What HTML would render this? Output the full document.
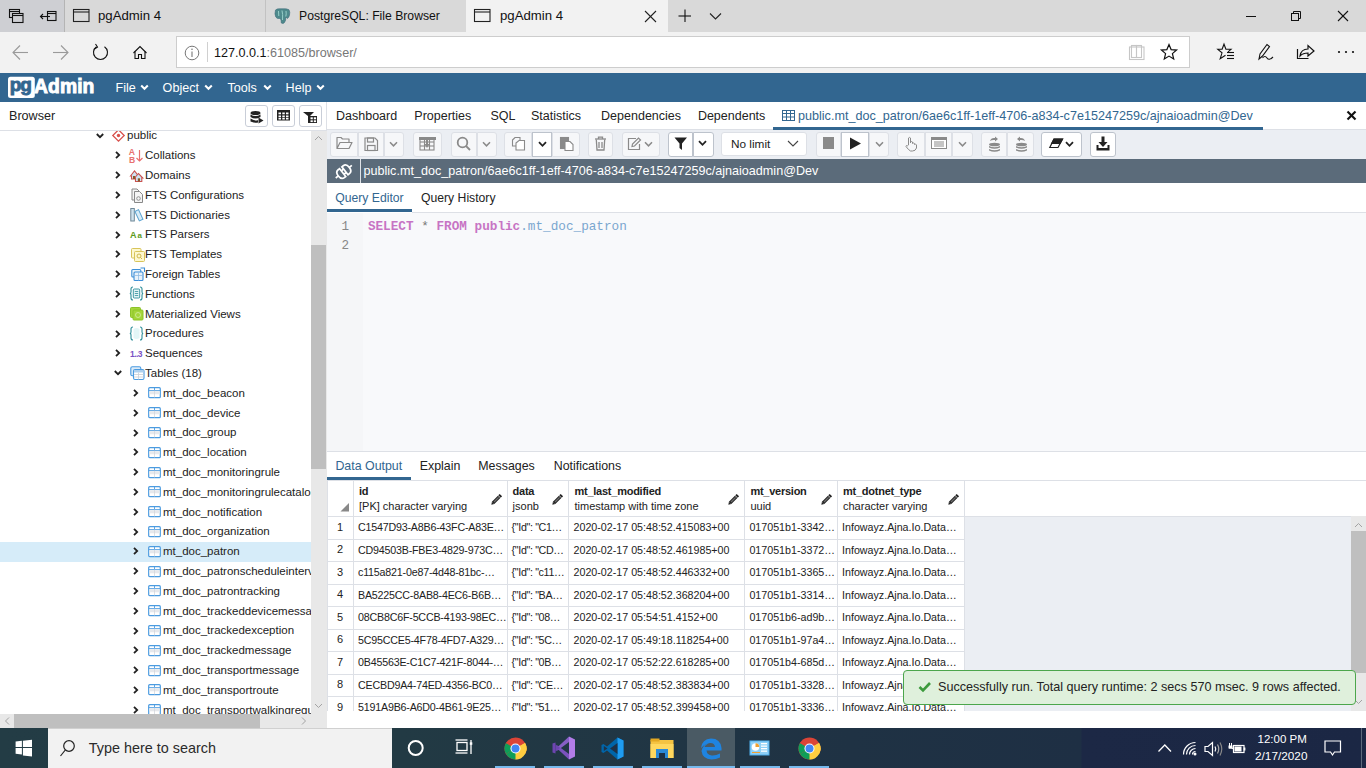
<!DOCTYPE html><html><head><meta charset="utf-8"><style>
html,body{margin:0;padding:0;}
body{width:1366px;height:768px;overflow:hidden;position:relative;background:#fff;font-family:"Liberation Sans",sans-serif;}
div,span,svg{box-sizing:border-box;}
.t{position:absolute;white-space:nowrap;line-height:1;}
svg{position:absolute;overflow:visible;}
</style></head><body>
<div style="position:absolute;left:0px;top:0px;width:1366px;height:32px;background:#d9d9d9"></div>
<div style="position:absolute;left:0px;top:0px;width:64px;height:32px;background:#cecfd3"></div>
<div style="position:absolute;left:64px;top:0px;width:1px;height:32px;background:#b4b4b4"></div>
<div style="position:absolute;left:265px;top:0px;width:1px;height:32px;background:#c2c2c2"></div>
<div style="position:absolute;left:466px;top:0px;width:202px;height:32px;background:#f2f2f2"></div>
<svg style="left:0;top:0" width="70" height="32"><g fill="none" stroke="#111" stroke-width="1.1">
<rect x="9.5" y="9.5" width="10" height="8"/><rect x="12.5" y="13.5" width="10.5" height="9" fill="#cecfd3"/>
<line x1="9.5" y1="11.5" x2="19.5" y2="11.5"/><line x1="12.5" y1="15.5" x2="23" y2="15.5"/>
<rect x="47.5" y="11.5" width="8.5" height="9"/><line x1="47.5" y1="13.5" x2="56" y2="13.5"/>
<line x1="40.5" y1="16.5" x2="50" y2="16.5"/><polyline points="43,14 40.5,16.5 43,19"/>
</g></svg>
<svg style="left:73px;top:8px" width="18" height="16"><g fill="none" stroke="#222" stroke-width="1.1"><rect x="0.5" y="1.5" width="15.5" height="12"/><line x1="0.5" y1="4" x2="16" y2="4"/></g></svg>
<div style="position:absolute;left:98px;top:8.05px;font:normal 13.2px/15.18px 'Liberation Sans',sans-serif;color:#111;white-space:nowrap;">pgAdmin 4</div>
<svg style="left:274px;top:8px" width="17" height="16"><path d="M1.5 2 Q3 0.5 6 0.8 L9 0.8 Q12.5 0.3 15 1.8 Q16.3 4 15.5 7 Q15 9.5 13.5 10.5 L12 9 L11.5 12.5 Q10.5 15.2 9 15.5 L7.3 15 L7 11.5 L5.5 10.5 Q3 11 1.8 9 Q0.3 6 1.5 2 Z" fill="#4e8a8c" stroke="#3d6a78" stroke-width="0.6"/><g stroke="#9fd6cf" stroke-width="0.9" fill="none"><path d="M4.5 3 L4.8 8"/><path d="M8 2.5 Q9 6 8.5 12"/><path d="M12 3 Q12.5 6 11.8 8.5"/></g></svg>
<div style="position:absolute;left:299px;top:8.96px;font:normal 12.2px/14.03px 'Liberation Sans',sans-serif;color:#111;white-space:nowrap;">PostgreSQL: File Browser</div>
<svg style="left:474px;top:8px" width="18" height="16"><g fill="none" stroke="#222" stroke-width="1.1"><rect x="0.5" y="1.5" width="15.5" height="12"/><line x1="0.5" y1="4" x2="16" y2="4"/></g></svg>
<div style="position:absolute;left:500px;top:8.05px;font:normal 13.2px/15.18px 'Liberation Sans',sans-serif;color:#111;white-space:nowrap;">pgAdmin 4</div>
<svg style="left:644px;top:10px" width="14" height="14"><g stroke="#222" stroke-width="1.1"><line x1="1" y1="1" x2="12" y2="12"/><line x1="12" y1="1" x2="1" y2="12"/></g></svg>
<svg style="left:678px;top:9px" width="14" height="14"><g stroke="#111" stroke-width="1.1"><line x1="7" y1="0.5" x2="7" y2="13"/><line x1="0.5" y1="7" x2="13" y2="7"/></g></svg>
<svg style="left:709px;top:12px" width="14" height="8"><polyline points="1,1.5 6.5,7 12,1.5" fill="none" stroke="#222" stroke-width="1.1"/></svg>
<div style="position:absolute;left:1246px;top:16px;width:10px;height:1px;background:#111"></div>
<svg style="left:1290px;top:10px" width="14" height="12"><g fill="none" stroke="#111" stroke-width="1"><rect x="1.5" y="3.5" width="7" height="7"/><polyline points="3.5,3.5 3.5,1.5 10.5,1.5 10.5,8.5 8.5,8.5"/></g></svg>
<svg style="left:1337px;top:10px" width="12" height="12"><g stroke="#111" stroke-width="1.1"><line x1="1" y1="1" x2="11" y2="11"/><line x1="11" y1="1" x2="1" y2="11"/></g></svg>
<div style="position:absolute;left:0px;top:32px;width:1366px;height:41px;background:#f2f2f2"></div>
<svg style="left:0;top:32px" width="170" height="41"><g fill="none" stroke-width="1.1">
<g stroke="#9a9a9a"><line x1="13" y1="20.5" x2="28" y2="20.5"/><polyline points="20,13.5 13,20.5 20,27.5"/>
<line x1="53" y1="20.5" x2="68" y2="20.5"/><polyline points="61,13.5 68,20.5 61,27.5"/></g>
<g stroke="#111"><path d="M104.5 14.8 A7 7 0 1 1 96.5 14.8"/><polyline points="95.5,12 97.5,15 94.5,17"/>
<polyline points="133.5,21 140,14.5 146.5,21"/><polyline points="135,19.5 135,26.5 138.5,26.5 138.5,22.5 141.5,22.5 141.5,26.5 145,26.5 145,19.5"/></g>
</g></svg>
<div style="position:absolute;left:176px;top:36px;width:1014px;height:32px;background:#fff;border:1px solid #cdcdcd"></div>
<svg style="left:184px;top:45px" width="16" height="16"><circle cx="8" cy="8" r="6.8" fill="none" stroke="#777" stroke-width="1"/><line x1="8" y1="6.5" x2="8" y2="12" stroke="#777" stroke-width="1.1"/><circle cx="8" cy="4.3" r="0.8" fill="#777"/></svg>
<div style="position:absolute;left:207px;top:42px;width:1px;height:20px;background:#d0d0d0"></div>
<div style="position:absolute;left:214px;top:45.60px;font:normal 12.6px/14.49px 'Liberation Sans',sans-serif;color:#111;white-space:nowrap;">127.0.0.1<span style="color:#777">:61085/browser/</span></div>
<svg style="left:1128px;top:45px" width="18" height="16"><g fill="none" stroke="#c6c6c6" stroke-width="1.1"><rect x="1.5" y="2" width="14.5" height="12.5"/><rect x="3.5" y="0.5" width="5" height="12"/><rect x="8.5" y="0.5" width="5" height="12"/></g></svg>
<svg style="left:1161px;top:44px" width="17" height="17"><polygon points="8.00,0.50 10.12,5.59 15.61,6.03 11.42,9.61 12.70,14.97 8.00,12.10 3.30,14.97 4.58,9.61 0.39,6.03 5.88,5.59" fill="none" stroke="#111" stroke-width="1.2" stroke-linejoin="miter"/></svg>
<svg style="left:1217px;top:43px" width="20" height="18"><path d="M11 8.8 L14 6.3 L8.9 6.3 L7 1.2 L5.1 6.3 L0.8 6.3 L5 9.8 L3.2 15.8 L8.5 12.3" fill="none" stroke="#111" stroke-width="1.1" stroke-linejoin="miter"/>
<g stroke="#111" stroke-width="1.1"><line x1="10" y1="9.5" x2="17" y2="9.5"/><line x1="10" y1="12.5" x2="17" y2="12.5"/><line x1="10" y1="15.5" x2="17" y2="15.5"/></g></svg>
<svg style="left:1257px;top:43px" width="20" height="18"><g fill="none" stroke="#111" stroke-width="1.1"><path d="M2 16 L3 11 L10 1.5 L12.5 3.5 L5.5 13 Z"/><path d="M5.5 15 Q8 12 10 15 T16 14"/></g></svg>
<svg style="left:1296px;top:43px" width="20" height="17"><g fill="none" stroke="#111" stroke-width="1.2"><polyline points="1.5,6 1.5,15.5 12.5,15.5"/><path d="M4 13 Q5 6 12 6 L12 2.5 L18 8 L12 13 L12 10 Q7 10 4 13 Z"/></g></svg>
<svg style="left:1337px;top:50px" width="18" height="4"><g fill="#111"><circle cx="2" cy="2" r="1.1"/><circle cx="9" cy="2" r="1.1"/><circle cx="16" cy="2" r="1.1"/></g></svg>
<div style="position:absolute;left:0px;top:73px;width:1366px;height:29px;background:#326690"></div>
<svg style="left:0;top:72px" width="100" height="30">
<rect x="8" y="4.8" width="26.8" height="21.2" rx="2.5" fill="#fff"/>
<text x="9.8" y="18.6" font-family="Liberation Sans" font-weight="bold" font-size="19" fill="#326690" stroke="#326690" stroke-width="0.9" letter-spacing="-1.2">pg</text>
<text x="34" y="21.2" font-family="Liberation Sans" font-weight="bold" font-size="19.3" fill="#fff" stroke="#fff" stroke-width="0.9" letter-spacing="0.1">Admin</text>
</svg>
<div style="position:absolute;left:115.5px;top:81.20px;font:normal 12.6px/14.49px 'Liberation Sans',sans-serif;color:#fff;white-space:nowrap;">File</div>
<svg style="left:140px;top:84px" width="10" height="7"><polyline points="1.2,1.5 4.5,4.8 7.8,1.5" fill="none" stroke="#fff" stroke-width="2"/></svg>
<div style="position:absolute;left:162.6px;top:81.20px;font:normal 12.6px/14.49px 'Liberation Sans',sans-serif;color:#fff;white-space:nowrap;">Object</div>
<svg style="left:204px;top:84px" width="10" height="7"><polyline points="1.2,1.5 4.5,4.8 7.8,1.5" fill="none" stroke="#fff" stroke-width="2"/></svg>
<div style="position:absolute;left:227.5px;top:81.20px;font:normal 12.6px/14.49px 'Liberation Sans',sans-serif;color:#fff;white-space:nowrap;">Tools</div>
<svg style="left:262.5px;top:84px" width="10" height="7"><polyline points="1.2,1.5 4.5,4.8 7.8,1.5" fill="none" stroke="#fff" stroke-width="2"/></svg>
<div style="position:absolute;left:285.6px;top:81.20px;font:normal 12.6px/14.49px 'Liberation Sans',sans-serif;color:#fff;white-space:nowrap;">Help</div>
<svg style="left:315.5px;top:84px" width="10" height="7"><polyline points="1.2,1.5 4.5,4.8 7.8,1.5" fill="none" stroke="#fff" stroke-width="2"/></svg>
<div style="position:absolute;left:0px;top:102px;width:327px;height:28px;background:#fff"></div>
<div style="position:absolute;left:9px;top:108.60px;font:normal 12.6px/14.49px 'Liberation Sans',sans-serif;color:#222;white-space:nowrap;">Browser</div>
<div style="position:absolute;left:0px;top:130px;width:327px;height:1px;background:#dde0e6"></div>
<div style="position:absolute;left:326px;top:102px;width:1px;height:28px;background:#dde0e6"></div>
<div style="position:absolute;left:245px;top:105px;width:23px;height:22px;background:#fff;border:1px solid #c9ced8;border-radius:3px"></div>
<div style="position:absolute;left:272px;top:105px;width:23px;height:22px;background:#fff;border:1px solid #c9ced8;border-radius:3px"></div>
<div style="position:absolute;left:299px;top:105px;width:23px;height:22px;background:#fff;border:1px solid #c9ced8;border-radius:3px"></div>
<svg style="left:249px;top:110px" width="16" height="15"><g fill="#222">
<ellipse cx="6.5" cy="3" rx="5" ry="2"/><path d="M1.5 4.5 Q6.5 7.5 11.5 4.5 L11.5 7 Q6.5 10 1.5 7Z"/><path d="M1.5 8.5 Q6.5 11.5 9 10 L9 12.5 Q6.5 13.5 1.5 11.5Z"/>
<polygon points="9.5,7.5 14.5,10.5 9.5,13.5"/></g></svg>
<svg style="left:276px;top:109px" width="16" height="13"><rect x="1" y="1" width="13" height="10.5" fill="#222"/><g fill="#fff">
<rect x="2.5" y="3.5" width="2.5" height="1.8"/><rect x="6.3" y="3.5" width="2.5" height="1.8"/><rect x="10" y="3.5" width="2.5" height="1.8"/>
<rect x="2.5" y="6.5" width="2.5" height="1.8"/><rect x="6.3" y="6.5" width="2.5" height="1.8"/><rect x="10" y="6.5" width="2.5" height="1.8"/>
<rect x="2.5" y="9" width="2.5" height="1.5"/><rect x="6.3" y="9" width="2.5" height="1.5"/><rect x="10" y="9" width="2.5" height="1.5"/></g></svg>
<svg style="left:302px;top:111px" width="18" height="14"><polygon points="1,1 12,1 8,5 8,12 6,12 6,5" fill="#222"/><rect x="7" y="5" width="8" height="7" fill="#222"/><g fill="#fff"><rect x="8.5" y="6.3" width="2.3" height="2"/><rect x="11.8" y="6.3" width="2.3" height="2"/><rect x="8.5" y="9.3" width="2.3" height="1.8"/><rect x="11.8" y="9.3" width="2.3" height="1.8"/></g></svg>
<div style="position:absolute;left:0;top:131px;width:311px;height:583px;overflow:hidden">
<svg style="left:96px;top:1.5px" width="9" height="6"><polyline points="0.8,1 4,4.2 7.2,1" fill="none" stroke="#222" stroke-width="1.8"/></svg>
<svg style="left:111.5px;top:-2.0px" width="13" height="13"><polygon points="6.5,0.8 12.2,6.5 6.5,12.2 0.8,6.5" fill="#fff" stroke="#d8504c" stroke-width="1.3"/><circle cx="6.5" cy="6.5" r="1.7" fill="#d8504c"/></svg>
<div style="position:absolute;left:127px;top:-1.61px;font:normal 11.5px/13.22px 'Liberation Sans',sans-serif;color:#222;white-space:nowrap;">public</div>
<svg style="left:115px;top:20.3px" width="7" height="9"><polyline points="1,0.8 4.2,4 1,7.2" fill="none" stroke="#222" stroke-width="1.8"/></svg>
<svg style="left:128.8px;top:17.3px" width="15" height="15"><text x="-0.3" y="7" font-family="Liberation Sans" font-weight="bold" font-size="8.6" fill="#e8706e">A</text><text x="0" y="14.6" font-family="Liberation Sans" font-weight="bold" font-size="8.6" fill="#e8706e">B</text><g stroke="#e8706e" stroke-width="1.2" fill="none"><line x1="10.5" y1="2" x2="10.5" y2="13"/><polyline points="7.5,10 10.5,13 13.5,10"/></g></svg>
<div style="position:absolute;left:145px;top:18.19px;font:normal 11.5px/13.22px 'Liberation Sans',sans-serif;color:#222;white-space:nowrap;">Collations</div>
<svg style="left:115px;top:40.1px" width="7" height="9"><polyline points="1,0.8 4.2,4 1,7.2" fill="none" stroke="#222" stroke-width="1.8"/></svg>
<svg style="left:129.4px;top:38.3px" width="15" height="13"><g stroke="#c9514e" stroke-width="1.1" fill="#cfe3f3"><path d="M1.5 7 L5.5 2 L9.5 7 L8.5 7 L8.5 10 L2.5 10 L2.5 7 Z"/><path d="M5.5 9 L9.5 4.5 L13.8 9 L12.8 9 L12.8 12.5 L6.5 12.5 L6.5 9 Z"/></g><rect x="4" y="7" width="2" height="3" fill="#8a5a2a"/><rect x="8.8" y="9.3" width="2.2" height="3.2" fill="#8a5a2a"/></svg>
<div style="position:absolute;left:145px;top:37.99px;font:normal 11.5px/13.22px 'Liberation Sans',sans-serif;color:#222;white-space:nowrap;">Domains</div>
<svg style="left:115px;top:59.9px" width="7" height="9"><polyline points="1,0.8 4.2,4 1,7.2" fill="none" stroke="#222" stroke-width="1.8"/></svg>
<svg style="left:130.8px;top:56.9px" width="14" height="15"><g stroke="#888" stroke-width="1" fill="#f4f4f4"><path d="M1 1 L6 1 L8 3 L8 12 L1 12 Z"/><path d="M3.5 3.5 L8.5 3.5 L11.5 6.5 L11.5 14.5 L3.5 14.5 Z"/></g><circle cx="7.5" cy="10.5" r="1.8" fill="none" stroke="#888" stroke-width="0.9"/></svg>
<div style="position:absolute;left:145px;top:57.79px;font:normal 11.5px/13.22px 'Liberation Sans',sans-serif;color:#222;white-space:nowrap;">FTS Configurations</div>
<svg style="left:115px;top:79.7px" width="7" height="9"><polyline points="1,0.8 4.2,4 1,7.2" fill="none" stroke="#222" stroke-width="1.8"/></svg>
<svg style="left:130.3px;top:77.2px" width="14" height="14"><rect x="0.8" y="0.5" width="3.5" height="12.5" fill="#cfe3ee" stroke="#6f8797" stroke-width="1"/><g transform="rotate(-25 9 7)"><rect x="6.8" y="2" width="4" height="10.5" fill="#d7ecf7" stroke="#5ba3d0" stroke-width="1"/></g></svg>
<div style="position:absolute;left:145px;top:77.59px;font:normal 11.5px/13.22px 'Liberation Sans',sans-serif;color:#222;white-space:nowrap;">FTS Dictionaries</div>
<svg style="left:115px;top:99.5px" width="7" height="9"><polyline points="1,0.8 4.2,4 1,7.2" fill="none" stroke="#222" stroke-width="1.8"/></svg>
<svg style="left:130.0px;top:97.0px" width="15" height="12"><text x="0" y="10" font-family="Liberation Sans" font-weight="bold" font-size="9" fill="#5c9a1c">A</text><text x="7.5" y="10" font-family="Liberation Sans" font-weight="bold" font-size="8" fill="#5c9a1c">a</text></svg>
<div style="position:absolute;left:145px;top:97.39px;font:normal 11.5px/13.22px 'Liberation Sans',sans-serif;color:#222;white-space:nowrap;">FTS Parsers</div>
<svg style="left:115px;top:119.3px" width="7" height="9"><polyline points="1,0.8 4.2,4 1,7.2" fill="none" stroke="#222" stroke-width="1.8"/></svg>
<svg style="left:130.5px;top:116.5px" width="14" height="14"><g stroke="#d8c45a" stroke-width="1" fill="#fdf8cf"><rect x="0.5" y="0.5" width="9.5" height="9.5" rx="1"/><rect x="3.5" y="3.5" width="10" height="10" rx="1"/></g><circle cx="8" cy="8" r="2" fill="none" stroke="#c9b03e" stroke-width="0.9"/><line x1="9.5" y1="9.5" x2="11" y2="11" stroke="#c9b03e" stroke-width="0.9"/></svg>
<div style="position:absolute;left:145px;top:117.19px;font:normal 11.5px/13.22px 'Liberation Sans',sans-serif;color:#222;white-space:nowrap;">FTS Templates</div>
<svg style="left:115px;top:139.1px" width="7" height="9"><polyline points="1,0.8 4.2,4 1,7.2" fill="none" stroke="#222" stroke-width="1.8"/></svg>
<svg style="left:130.5px;top:136.1px" width="14" height="14"><g stroke="#3d8fd8" stroke-width="1.1" fill="#e8f2fb"><rect x="0.8" y="2.5" width="9" height="7.5" rx="1"/><rect x="3" y="5" width="9" height="8.5" rx="1"/></g><g stroke="#8fbbe5" stroke-width="0.8"><line x1="3" y1="8.5" x2="12" y2="8.5"/><line x1="7.5" y1="5" x2="7.5" y2="13.5"/></g><path d="M9.5 1 L13.5 1 L13.5 5" fill="none" stroke="#3d8fd8" stroke-width="1.1"/></svg>
<div style="position:absolute;left:145px;top:136.99px;font:normal 11.5px/13.22px 'Liberation Sans',sans-serif;color:#222;white-space:nowrap;">Foreign Tables</div>
<svg style="left:115px;top:158.9px" width="7" height="9"><polyline points="1,0.8 4.2,4 1,7.2" fill="none" stroke="#222" stroke-width="1.8"/></svg>
<svg style="left:129.3px;top:155.4px" width="15" height="15"><g fill="none" stroke="#2f8f9a" stroke-width="1.1"><path d="M4 1 Q2 1 2 3 L2 6 Q2 7.5 0.8 7.5 Q2 7.5 2 9 L2 12 Q2 14 4 14"/><path d="M11 1 Q13 1 13 3 L13 6 Q13 7.5 14.2 7.5 Q13 7.5 13 9 L13 12 Q13 14 11 14"/></g><rect x="4.3" y="3" width="6.4" height="9" rx="1" fill="#e3f4f6" stroke="#2f8f9a" stroke-width="0.9"/><g stroke="#2f8f9a" stroke-width="0.8"><line x1="5.8" y1="5.5" x2="9.2" y2="5.5"/><line x1="5.8" y1="7.5" x2="9.2" y2="7.5"/><line x1="5.8" y1="9.5" x2="9.2" y2="9.5"/></g></svg>
<div style="position:absolute;left:145px;top:156.79px;font:normal 11.5px/13.22px 'Liberation Sans',sans-serif;color:#222;white-space:nowrap;">Functions</div>
<svg style="left:115px;top:178.7px" width="7" height="9"><polyline points="1,0.8 4.2,4 1,7.2" fill="none" stroke="#222" stroke-width="1.8"/></svg>
<svg style="left:130.0px;top:175.7px" width="14" height="14"><g fill="#a5d63a" stroke="#8cc32a" stroke-width="1"><rect x="0.5" y="0.5" width="10" height="10" rx="1"/><rect x="3" y="3" width="10" height="10" rx="1"/></g><circle cx="8" cy="8" r="2.5" fill="none" stroke="#cfeb9a" stroke-width="0.9"/></svg>
<div style="position:absolute;left:145px;top:176.59px;font:normal 11.5px/13.22px 'Liberation Sans',sans-serif;color:#222;white-space:nowrap;">Materialized Views</div>
<svg style="left:115px;top:198.5px" width="7" height="9"><polyline points="1,0.8 4.2,4 1,7.2" fill="none" stroke="#222" stroke-width="1.8"/></svg>
<svg style="left:129.3px;top:195.0px" width="15" height="15"><g fill="none" stroke="#2f8f9a" stroke-width="1.1"><path d="M4 1 Q2 1 2 3 L2 6 Q2 7.5 0.8 7.5 Q2 7.5 2 9 L2 12 Q2 14 4 14"/><path d="M11 1 Q13 1 13 3 L13 6 Q13 7.5 14.2 7.5 Q13 7.5 13 9 L13 12 Q13 14 11 14"/><path d="M4.5 3 Q7.5 1 10.5 3 L10.5 12 Q7.5 14 4.5 12 Z" fill="#e3f6f7" stroke="none"/></g></svg>
<div style="position:absolute;left:145px;top:196.39px;font:normal 11.5px/13.22px 'Liberation Sans',sans-serif;color:#222;white-space:nowrap;">Procedures</div>
<svg style="left:115px;top:218.3px" width="7" height="9"><polyline points="1,0.8 4.2,4 1,7.2" fill="none" stroke="#222" stroke-width="1.8"/></svg>
<svg style="left:129.5px;top:215.8px" width="15" height="12"><text x="0" y="10" font-family="Liberation Sans" font-weight="bold" font-size="8.5" fill="#7a4fc4" letter-spacing="-0.6">1..3</text></svg>
<div style="position:absolute;left:145px;top:216.19px;font:normal 11.5px/13.22px 'Liberation Sans',sans-serif;color:#222;white-space:nowrap;">Sequences</div>
<svg style="left:114px;top:239.1px" width="9" height="6"><polyline points="0.8,1 4,4.2 7.2,1" fill="none" stroke="#222" stroke-width="1.8"/></svg>
<svg style="left:130.0px;top:235.1px" width="15" height="15"><rect x="0.8" y="0.8" width="10" height="9" rx="1.5" fill="#dcebf8" stroke="#4b9be0" stroke-width="1.1"/><rect x="3.5" y="3.5" width="10.5" height="10" rx="1.5" fill="#fff" stroke="#4b9be0" stroke-width="1.1"/><rect x="4" y="4" width="9.5" height="2.5" fill="#aed0ee"/><g stroke="#c9ced6" stroke-width="0.8"><line x1="4" y1="8.5" x2="13.5" y2="8.5"/><line x1="4" y1="11" x2="13.5" y2="11"/><line x1="8.5" y1="6.5" x2="8.5" y2="13.5"/></g></svg>
<div style="position:absolute;left:145px;top:235.99px;font:normal 11.5px/13.22px 'Liberation Sans',sans-serif;color:#222;white-space:nowrap;">Tables (18)</div>
<svg style="left:133px;top:257.9px" width="7" height="9"><polyline points="1,0.8 4.2,4 1,7.2" fill="none" stroke="#222" stroke-width="1.8"/></svg>
<svg style="left:148.2px;top:256.3px" width="13" height="12"><rect x="0.7" y="0.7" width="11.6" height="10" rx="1" fill="#fff" stroke="#4b9be0" stroke-width="1.2"/><g stroke="#4b9be0" stroke-width="0.9"><line x1="0.7" y1="3.6" x2="12.3" y2="3.6"/><line x1="6.5" y1="0.7" x2="6.5" y2="3.6"/></g><rect x="1.3" y="4.3" width="10.4" height="3" fill="#e6e8ec"/><g stroke="#cfd3da" stroke-width="0.7"><line x1="6.5" y1="3.6" x2="6.5" y2="10.5"/></g></svg>
<div style="position:absolute;left:163px;top:255.79px;font:normal 11.5px/13.22px 'Liberation Sans',sans-serif;color:#222;white-space:nowrap;">mt_doc_beacon</div>
<svg style="left:133px;top:277.7px" width="7" height="9"><polyline points="1,0.8 4.2,4 1,7.2" fill="none" stroke="#222" stroke-width="1.8"/></svg>
<svg style="left:148.2px;top:276.1px" width="13" height="12"><rect x="0.7" y="0.7" width="11.6" height="10" rx="1" fill="#fff" stroke="#4b9be0" stroke-width="1.2"/><g stroke="#4b9be0" stroke-width="0.9"><line x1="0.7" y1="3.6" x2="12.3" y2="3.6"/><line x1="6.5" y1="0.7" x2="6.5" y2="3.6"/></g><rect x="1.3" y="4.3" width="10.4" height="3" fill="#e6e8ec"/><g stroke="#cfd3da" stroke-width="0.7"><line x1="6.5" y1="3.6" x2="6.5" y2="10.5"/></g></svg>
<div style="position:absolute;left:163px;top:275.59px;font:normal 11.5px/13.22px 'Liberation Sans',sans-serif;color:#222;white-space:nowrap;">mt_doc_device</div>
<svg style="left:133px;top:297.5px" width="7" height="9"><polyline points="1,0.8 4.2,4 1,7.2" fill="none" stroke="#222" stroke-width="1.8"/></svg>
<svg style="left:148.2px;top:295.9px" width="13" height="12"><rect x="0.7" y="0.7" width="11.6" height="10" rx="1" fill="#fff" stroke="#4b9be0" stroke-width="1.2"/><g stroke="#4b9be0" stroke-width="0.9"><line x1="0.7" y1="3.6" x2="12.3" y2="3.6"/><line x1="6.5" y1="0.7" x2="6.5" y2="3.6"/></g><rect x="1.3" y="4.3" width="10.4" height="3" fill="#e6e8ec"/><g stroke="#cfd3da" stroke-width="0.7"><line x1="6.5" y1="3.6" x2="6.5" y2="10.5"/></g></svg>
<div style="position:absolute;left:163px;top:295.39px;font:normal 11.5px/13.22px 'Liberation Sans',sans-serif;color:#222;white-space:nowrap;">mt_doc_group</div>
<svg style="left:133px;top:317.3px" width="7" height="9"><polyline points="1,0.8 4.2,4 1,7.2" fill="none" stroke="#222" stroke-width="1.8"/></svg>
<svg style="left:148.2px;top:315.7px" width="13" height="12"><rect x="0.7" y="0.7" width="11.6" height="10" rx="1" fill="#fff" stroke="#4b9be0" stroke-width="1.2"/><g stroke="#4b9be0" stroke-width="0.9"><line x1="0.7" y1="3.6" x2="12.3" y2="3.6"/><line x1="6.5" y1="0.7" x2="6.5" y2="3.6"/></g><rect x="1.3" y="4.3" width="10.4" height="3" fill="#e6e8ec"/><g stroke="#cfd3da" stroke-width="0.7"><line x1="6.5" y1="3.6" x2="6.5" y2="10.5"/></g></svg>
<div style="position:absolute;left:163px;top:315.19px;font:normal 11.5px/13.22px 'Liberation Sans',sans-serif;color:#222;white-space:nowrap;">mt_doc_location</div>
<svg style="left:133px;top:337.1px" width="7" height="9"><polyline points="1,0.8 4.2,4 1,7.2" fill="none" stroke="#222" stroke-width="1.8"/></svg>
<svg style="left:148.2px;top:335.5px" width="13" height="12"><rect x="0.7" y="0.7" width="11.6" height="10" rx="1" fill="#fff" stroke="#4b9be0" stroke-width="1.2"/><g stroke="#4b9be0" stroke-width="0.9"><line x1="0.7" y1="3.6" x2="12.3" y2="3.6"/><line x1="6.5" y1="0.7" x2="6.5" y2="3.6"/></g><rect x="1.3" y="4.3" width="10.4" height="3" fill="#e6e8ec"/><g stroke="#cfd3da" stroke-width="0.7"><line x1="6.5" y1="3.6" x2="6.5" y2="10.5"/></g></svg>
<div style="position:absolute;left:163px;top:334.99px;font:normal 11.5px/13.22px 'Liberation Sans',sans-serif;color:#222;white-space:nowrap;">mt_doc_monitoringrule</div>
<svg style="left:133px;top:356.9px" width="7" height="9"><polyline points="1,0.8 4.2,4 1,7.2" fill="none" stroke="#222" stroke-width="1.8"/></svg>
<svg style="left:148.2px;top:355.3px" width="13" height="12"><rect x="0.7" y="0.7" width="11.6" height="10" rx="1" fill="#fff" stroke="#4b9be0" stroke-width="1.2"/><g stroke="#4b9be0" stroke-width="0.9"><line x1="0.7" y1="3.6" x2="12.3" y2="3.6"/><line x1="6.5" y1="0.7" x2="6.5" y2="3.6"/></g><rect x="1.3" y="4.3" width="10.4" height="3" fill="#e6e8ec"/><g stroke="#cfd3da" stroke-width="0.7"><line x1="6.5" y1="3.6" x2="6.5" y2="10.5"/></g></svg>
<div style="position:absolute;left:163px;top:354.79px;font:normal 11.5px/13.22px 'Liberation Sans',sans-serif;color:#222;white-space:nowrap;">mt_doc_monitoringrulecatalog</div>
<svg style="left:133px;top:376.7px" width="7" height="9"><polyline points="1,0.8 4.2,4 1,7.2" fill="none" stroke="#222" stroke-width="1.8"/></svg>
<svg style="left:148.2px;top:375.1px" width="13" height="12"><rect x="0.7" y="0.7" width="11.6" height="10" rx="1" fill="#fff" stroke="#4b9be0" stroke-width="1.2"/><g stroke="#4b9be0" stroke-width="0.9"><line x1="0.7" y1="3.6" x2="12.3" y2="3.6"/><line x1="6.5" y1="0.7" x2="6.5" y2="3.6"/></g><rect x="1.3" y="4.3" width="10.4" height="3" fill="#e6e8ec"/><g stroke="#cfd3da" stroke-width="0.7"><line x1="6.5" y1="3.6" x2="6.5" y2="10.5"/></g></svg>
<div style="position:absolute;left:163px;top:374.59px;font:normal 11.5px/13.22px 'Liberation Sans',sans-serif;color:#222;white-space:nowrap;">mt_doc_notification</div>
<svg style="left:133px;top:396.5px" width="7" height="9"><polyline points="1,0.8 4.2,4 1,7.2" fill="none" stroke="#222" stroke-width="1.8"/></svg>
<svg style="left:148.2px;top:394.9px" width="13" height="12"><rect x="0.7" y="0.7" width="11.6" height="10" rx="1" fill="#fff" stroke="#4b9be0" stroke-width="1.2"/><g stroke="#4b9be0" stroke-width="0.9"><line x1="0.7" y1="3.6" x2="12.3" y2="3.6"/><line x1="6.5" y1="0.7" x2="6.5" y2="3.6"/></g><rect x="1.3" y="4.3" width="10.4" height="3" fill="#e6e8ec"/><g stroke="#cfd3da" stroke-width="0.7"><line x1="6.5" y1="3.6" x2="6.5" y2="10.5"/></g></svg>
<div style="position:absolute;left:163px;top:394.39px;font:normal 11.5px/13.22px 'Liberation Sans',sans-serif;color:#222;white-space:nowrap;">mt_doc_organization</div>
<div style="position:absolute;left:0px;top:411px;width:311px;height:20px;background:#d6ecf9"></div>
<svg style="left:133px;top:416.3px" width="7" height="9"><polyline points="1,0.8 4.2,4 1,7.2" fill="none" stroke="#222" stroke-width="1.8"/></svg>
<svg style="left:148.2px;top:414.7px" width="13" height="12"><rect x="0.7" y="0.7" width="11.6" height="10" rx="1" fill="#fff" stroke="#4b9be0" stroke-width="1.2"/><g stroke="#4b9be0" stroke-width="0.9"><line x1="0.7" y1="3.6" x2="12.3" y2="3.6"/><line x1="6.5" y1="0.7" x2="6.5" y2="3.6"/></g><rect x="1.3" y="4.3" width="10.4" height="3" fill="#e6e8ec"/><g stroke="#cfd3da" stroke-width="0.7"><line x1="6.5" y1="3.6" x2="6.5" y2="10.5"/></g></svg>
<div style="position:absolute;left:163px;top:414.19px;font:normal 11.5px/13.22px 'Liberation Sans',sans-serif;color:#222;white-space:nowrap;">mt_doc_patron</div>
<svg style="left:133px;top:436.1px" width="7" height="9"><polyline points="1,0.8 4.2,4 1,7.2" fill="none" stroke="#222" stroke-width="1.8"/></svg>
<svg style="left:148.2px;top:434.5px" width="13" height="12"><rect x="0.7" y="0.7" width="11.6" height="10" rx="1" fill="#fff" stroke="#4b9be0" stroke-width="1.2"/><g stroke="#4b9be0" stroke-width="0.9"><line x1="0.7" y1="3.6" x2="12.3" y2="3.6"/><line x1="6.5" y1="0.7" x2="6.5" y2="3.6"/></g><rect x="1.3" y="4.3" width="10.4" height="3" fill="#e6e8ec"/><g stroke="#cfd3da" stroke-width="0.7"><line x1="6.5" y1="3.6" x2="6.5" y2="10.5"/></g></svg>
<div style="position:absolute;left:163px;top:433.99px;font:normal 11.5px/13.22px 'Liberation Sans',sans-serif;color:#222;white-space:nowrap;">mt_doc_patronscheduleinterval</div>
<svg style="left:133px;top:455.9px" width="7" height="9"><polyline points="1,0.8 4.2,4 1,7.2" fill="none" stroke="#222" stroke-width="1.8"/></svg>
<svg style="left:148.2px;top:454.3px" width="13" height="12"><rect x="0.7" y="0.7" width="11.6" height="10" rx="1" fill="#fff" stroke="#4b9be0" stroke-width="1.2"/><g stroke="#4b9be0" stroke-width="0.9"><line x1="0.7" y1="3.6" x2="12.3" y2="3.6"/><line x1="6.5" y1="0.7" x2="6.5" y2="3.6"/></g><rect x="1.3" y="4.3" width="10.4" height="3" fill="#e6e8ec"/><g stroke="#cfd3da" stroke-width="0.7"><line x1="6.5" y1="3.6" x2="6.5" y2="10.5"/></g></svg>
<div style="position:absolute;left:163px;top:453.79px;font:normal 11.5px/13.22px 'Liberation Sans',sans-serif;color:#222;white-space:nowrap;">mt_doc_patrontracking</div>
<svg style="left:133px;top:475.7px" width="7" height="9"><polyline points="1,0.8 4.2,4 1,7.2" fill="none" stroke="#222" stroke-width="1.8"/></svg>
<svg style="left:148.2px;top:474.1px" width="13" height="12"><rect x="0.7" y="0.7" width="11.6" height="10" rx="1" fill="#fff" stroke="#4b9be0" stroke-width="1.2"/><g stroke="#4b9be0" stroke-width="0.9"><line x1="0.7" y1="3.6" x2="12.3" y2="3.6"/><line x1="6.5" y1="0.7" x2="6.5" y2="3.6"/></g><rect x="1.3" y="4.3" width="10.4" height="3" fill="#e6e8ec"/><g stroke="#cfd3da" stroke-width="0.7"><line x1="6.5" y1="3.6" x2="6.5" y2="10.5"/></g></svg>
<div style="position:absolute;left:163px;top:473.59px;font:normal 11.5px/13.22px 'Liberation Sans',sans-serif;color:#222;white-space:nowrap;">mt_doc_trackeddevicemessage</div>
<svg style="left:133px;top:495.5px" width="7" height="9"><polyline points="1,0.8 4.2,4 1,7.2" fill="none" stroke="#222" stroke-width="1.8"/></svg>
<svg style="left:148.2px;top:493.9px" width="13" height="12"><rect x="0.7" y="0.7" width="11.6" height="10" rx="1" fill="#fff" stroke="#4b9be0" stroke-width="1.2"/><g stroke="#4b9be0" stroke-width="0.9"><line x1="0.7" y1="3.6" x2="12.3" y2="3.6"/><line x1="6.5" y1="0.7" x2="6.5" y2="3.6"/></g><rect x="1.3" y="4.3" width="10.4" height="3" fill="#e6e8ec"/><g stroke="#cfd3da" stroke-width="0.7"><line x1="6.5" y1="3.6" x2="6.5" y2="10.5"/></g></svg>
<div style="position:absolute;left:163px;top:493.39px;font:normal 11.5px/13.22px 'Liberation Sans',sans-serif;color:#222;white-space:nowrap;">mt_doc_trackedexception</div>
<svg style="left:133px;top:515.3px" width="7" height="9"><polyline points="1,0.8 4.2,4 1,7.2" fill="none" stroke="#222" stroke-width="1.8"/></svg>
<svg style="left:148.2px;top:513.7px" width="13" height="12"><rect x="0.7" y="0.7" width="11.6" height="10" rx="1" fill="#fff" stroke="#4b9be0" stroke-width="1.2"/><g stroke="#4b9be0" stroke-width="0.9"><line x1="0.7" y1="3.6" x2="12.3" y2="3.6"/><line x1="6.5" y1="0.7" x2="6.5" y2="3.6"/></g><rect x="1.3" y="4.3" width="10.4" height="3" fill="#e6e8ec"/><g stroke="#cfd3da" stroke-width="0.7"><line x1="6.5" y1="3.6" x2="6.5" y2="10.5"/></g></svg>
<div style="position:absolute;left:163px;top:513.19px;font:normal 11.5px/13.22px 'Liberation Sans',sans-serif;color:#222;white-space:nowrap;">mt_doc_trackedmessage</div>
<svg style="left:133px;top:535.1px" width="7" height="9"><polyline points="1,0.8 4.2,4 1,7.2" fill="none" stroke="#222" stroke-width="1.8"/></svg>
<svg style="left:148.2px;top:533.5px" width="13" height="12"><rect x="0.7" y="0.7" width="11.6" height="10" rx="1" fill="#fff" stroke="#4b9be0" stroke-width="1.2"/><g stroke="#4b9be0" stroke-width="0.9"><line x1="0.7" y1="3.6" x2="12.3" y2="3.6"/><line x1="6.5" y1="0.7" x2="6.5" y2="3.6"/></g><rect x="1.3" y="4.3" width="10.4" height="3" fill="#e6e8ec"/><g stroke="#cfd3da" stroke-width="0.7"><line x1="6.5" y1="3.6" x2="6.5" y2="10.5"/></g></svg>
<div style="position:absolute;left:163px;top:532.99px;font:normal 11.5px/13.22px 'Liberation Sans',sans-serif;color:#222;white-space:nowrap;">mt_doc_transportmessage</div>
<svg style="left:133px;top:554.9px" width="7" height="9"><polyline points="1,0.8 4.2,4 1,7.2" fill="none" stroke="#222" stroke-width="1.8"/></svg>
<svg style="left:148.2px;top:553.3px" width="13" height="12"><rect x="0.7" y="0.7" width="11.6" height="10" rx="1" fill="#fff" stroke="#4b9be0" stroke-width="1.2"/><g stroke="#4b9be0" stroke-width="0.9"><line x1="0.7" y1="3.6" x2="12.3" y2="3.6"/><line x1="6.5" y1="0.7" x2="6.5" y2="3.6"/></g><rect x="1.3" y="4.3" width="10.4" height="3" fill="#e6e8ec"/><g stroke="#cfd3da" stroke-width="0.7"><line x1="6.5" y1="3.6" x2="6.5" y2="10.5"/></g></svg>
<div style="position:absolute;left:163px;top:552.79px;font:normal 11.5px/13.22px 'Liberation Sans',sans-serif;color:#222;white-space:nowrap;">mt_doc_transportroute</div>
<svg style="left:133px;top:574.7px" width="7" height="9"><polyline points="1,0.8 4.2,4 1,7.2" fill="none" stroke="#222" stroke-width="1.8"/></svg>
<svg style="left:148.2px;top:573.1px" width="13" height="12"><rect x="0.7" y="0.7" width="11.6" height="10" rx="1" fill="#fff" stroke="#4b9be0" stroke-width="1.2"/><g stroke="#4b9be0" stroke-width="0.9"><line x1="0.7" y1="3.6" x2="12.3" y2="3.6"/><line x1="6.5" y1="0.7" x2="6.5" y2="3.6"/></g><rect x="1.3" y="4.3" width="10.4" height="3" fill="#e6e8ec"/><g stroke="#cfd3da" stroke-width="0.7"><line x1="6.5" y1="3.6" x2="6.5" y2="10.5"/></g></svg>
<div style="position:absolute;left:163px;top:572.59px;font:normal 11.5px/13.22px 'Liberation Sans',sans-serif;color:#222;white-space:nowrap;">mt_doc_transportwalkingrequest</div>
</div>
<div style="position:absolute;left:311px;top:131px;width:16px;height:583px;background:#e8e8e8"></div>
<div style="position:absolute;left:311px;top:245px;width:15px;height:224px;background:#bfbfbf"></div>
<svg style="left:311px;top:131px" width="15" height="583"><polyline points="4,9 7.5,5.5 11,9" fill="none" stroke="#a3a3a3" stroke-width="1"/><polyline points="4,573 7.5,576.5 11,573" fill="none" stroke="#a3a3a3" stroke-width="1"/></svg>
<div style="position:absolute;left:0px;top:714px;width:327px;height:14px;background:#e8e8e8"></div>
<div style="position:absolute;left:14px;top:714px;width:246px;height:14px;background:#bfbfbf"></div>
<svg style="left:0;top:714px" width="311" height="14"><polyline points="9,3.5 5.5,7 9,10.5" fill="none" stroke="#a3a3a3" stroke-width="1"/><polyline points="302,3.5 305.5,7 302,10.5" fill="none" stroke="#a3a3a3" stroke-width="1"/></svg>
<div style="position:absolute;left:327px;top:102px;width:1039px;height:28px;background:#fff"></div>
<div style="position:absolute;left:336px;top:108.89px;font:normal 12.5px/14.37px 'Liberation Sans',sans-serif;color:#222;white-space:nowrap;">Dashboard</div>
<div style="position:absolute;left:414.3px;top:108.89px;font:normal 12.5px/14.37px 'Liberation Sans',sans-serif;color:#222;white-space:nowrap;">Properties</div>
<div style="position:absolute;left:490.4px;top:108.89px;font:normal 12.5px/14.37px 'Liberation Sans',sans-serif;color:#222;white-space:nowrap;">SQL</div>
<div style="position:absolute;left:530.9px;top:108.89px;font:normal 12.5px/14.37px 'Liberation Sans',sans-serif;color:#222;white-space:nowrap;">Statistics</div>
<div style="position:absolute;left:601.1px;top:108.89px;font:normal 12.5px/14.37px 'Liberation Sans',sans-serif;color:#222;white-space:nowrap;">Dependencies</div>
<div style="position:absolute;left:697.9px;top:108.89px;font:normal 12.5px/14.37px 'Liberation Sans',sans-serif;color:#222;white-space:nowrap;">Dependents</div>
<div style="position:absolute;left:327px;top:129px;width:1039px;height:1px;background:#dde0e6"></div>
<svg style="left:782px;top:110px" width="14" height="12"><rect x="0.5" y="0.5" width="12" height="10" fill="#fff" stroke="#326690" stroke-width="1"/><g stroke="#326690" stroke-width="1"><line x1="0.5" y1="3.5" x2="12.5" y2="3.5"/><line x1="0.5" y1="7" x2="12.5" y2="7"/><line x1="4.5" y1="0.5" x2="4.5" y2="10.5"/><line x1="8.5" y1="0.5" x2="8.5" y2="10.5"/></g></svg>
<div style="position:absolute;left:798px;top:108.80px;font:normal 12.6px/14.49px 'Liberation Sans',sans-serif;color:#326690;white-space:nowrap;">public.mt_doc_patron/6ae6c1ff-1eff-4706-a834-c7e15247259c/ajnaioadmin@Dev</div>
<div style="position:absolute;left:773px;top:127px;width:490px;height:3px;background:#326690"></div>
<svg style="left:1346px;top:110px" width="11" height="11"><g stroke="#111" stroke-width="2.2"><line x1="1.5" y1="1.5" x2="9.5" y2="9.5"/><line x1="9.5" y1="1.5" x2="1.5" y2="9.5"/></g></svg>
<div style="position:absolute;left:327px;top:130px;width:1039px;height:29px;background:#ebeef3"></div>
<div style="position:absolute;left:330px;top:131.5px;width:28px;height:25px;background:#f6f7f9;border:1px solid #dde0e6;border-radius:3px 0 0 3px"></div>
<div style="position:absolute;left:358px;top:131.5px;width:26px;height:25px;background:#f6f7f9;border:1px solid #dde0e6;border-radius:0 0 0 0"></div>
<div style="position:absolute;left:384px;top:131.5px;width:20px;height:25px;background:#f6f7f9;border:1px solid #dde0e6;border-radius:0 3px 3px 0"></div>
<div style="position:absolute;left:413px;top:131.5px;width:29px;height:25px;background:#f6f7f9;border:1px solid #dde0e6;border-radius:3px 3px 3px 3px"></div>
<div style="position:absolute;left:451px;top:131.5px;width:26px;height:25px;background:#f6f7f9;border:1px solid #dde0e6;border-radius:3px 0 0 3px"></div>
<div style="position:absolute;left:477px;top:131.5px;width:20px;height:25px;background:#f6f7f9;border:1px solid #dde0e6;border-radius:0 3px 3px 0"></div>
<div style="position:absolute;left:504px;top:131.5px;width:28px;height:25px;background:#f6f7f9;border:1px solid #dde0e6;border-radius:3px 0 0 3px"></div>
<div style="position:absolute;left:532px;top:131.5px;width:20px;height:25px;background:#fff;border:1px solid #bdc3cc;border-radius:0 0 0 0"></div>
<div style="position:absolute;left:552px;top:131.5px;width:28px;height:25px;background:#f6f7f9;border:1px solid #dde0e6;border-radius:0 3px 3px 0"></div>
<div style="position:absolute;left:588px;top:131.5px;width:25px;height:25px;background:#f6f7f9;border:1px solid #dde0e6;border-radius:3px 3px 3px 3px"></div>
<div style="position:absolute;left:622px;top:131.5px;width:38px;height:25px;background:#f6f7f9;border:1px solid #dde0e6;border-radius:3px 3px 3px 3px"></div>
<div style="position:absolute;left:668px;top:131.5px;width:25px;height:25px;background:#fff;border:1px solid #bdc3cc;border-radius:3px 0 0 3px"></div>
<div style="position:absolute;left:693px;top:131.5px;width:21px;height:25px;background:#fff;border:1px solid #bdc3cc;border-radius:0 3px 3px 0"></div>
<div style="position:absolute;left:816px;top:131.5px;width:25px;height:25px;background:#f6f7f9;border:1px solid #dde0e6;border-radius:3px 0 0 3px"></div>
<div style="position:absolute;left:841px;top:131.5px;width:28px;height:25px;background:#fff;border:1px solid #bdc3cc;border-radius:0 0 0 0"></div>
<div style="position:absolute;left:869px;top:131.5px;width:20px;height:25px;background:#f6f7f9;border:1px solid #dde0e6;border-radius:0 3px 3px 0"></div>
<div style="position:absolute;left:897px;top:131.5px;width:28px;height:25px;background:#f6f7f9;border:1px solid #dde0e6;border-radius:3px 0 0 3px"></div>
<div style="position:absolute;left:925px;top:131.5px;width:27px;height:25px;background:#f6f7f9;border:1px solid #dde0e6;border-radius:0 0 0 0"></div>
<div style="position:absolute;left:952px;top:131.5px;width:21px;height:25px;background:#f6f7f9;border:1px solid #dde0e6;border-radius:0 3px 3px 0"></div>
<div style="position:absolute;left:981px;top:131.5px;width:26px;height:25px;background:#f6f7f9;border:1px solid #dde0e6;border-radius:3px 0 0 3px"></div>
<div style="position:absolute;left:1007px;top:131.5px;width:27px;height:25px;background:#f6f7f9;border:1px solid #dde0e6;border-radius:0 3px 3px 0"></div>
<div style="position:absolute;left:1041px;top:131.5px;width:41px;height:25px;background:#fff;border:1px solid #bdc3cc;border-radius:3px 3px 3px 3px"></div>
<div style="position:absolute;left:1090px;top:131.5px;width:26px;height:25px;background:#fff;border:1px solid #bdc3cc;border-radius:3px 3px 3px 3px"></div>
<div style="position:absolute;left:721px;top:132px;width:86px;height:24px;background:#fff;border:1px solid #dde0e6;border-radius:3px"></div>
<div style="position:absolute;left:731px;top:137.82px;font:normal 11.8px/13.57px 'Liberation Sans',sans-serif;color:#222;white-space:nowrap;">No limit</div>
<svg style="left:787px;top:140px" width="12" height="8"><polyline points="1,1 6,6 11,1" fill="none" stroke="#444" stroke-width="1.1"/></svg>
<div style="position:absolute;left:327px;top:159px;width:1039px;height:24px;background:#5b6b7a"></div>
<div style="position:absolute;left:360px;top:159px;width:1px;height:24px;background:#dfe3e8"></div>
<div style="position:absolute;left:363.5px;top:164.10px;font:normal 12.6px/14.49px 'Liberation Sans',sans-serif;color:#fff;white-space:nowrap;">public.mt_doc_patron/6ae6c1ff-1eff-4706-a834-c7e15247259c/ajnaioadmin@Dev</div>
<div style="position:absolute;left:327px;top:183px;width:1039px;height:29px;background:#fff"></div>
<div style="position:absolute;left:335.2px;top:191.46px;font:normal 12.2px/14.03px 'Liberation Sans',sans-serif;color:#326690;white-space:nowrap;">Query Editor</div>
<div style="position:absolute;left:421px;top:191.46px;font:normal 12.2px/14.03px 'Liberation Sans',sans-serif;color:#222;white-space:nowrap;">Query History</div>
<div style="position:absolute;left:327px;top:209px;width:85px;height:3px;background:#326690"></div>
<div style="position:absolute;left:412px;top:212px;width:954px;height:1px;background:#dde0e6"></div>
<div style="position:absolute;left:327px;top:213px;width:1039px;height:238px;background:#f8f9fb"></div>
<div style="position:absolute;left:327px;top:213px;width:36px;height:238px;background:#f5f6f8"></div>
<div style="position:absolute;left:341.5px;top:219.80px;font:normal 12.6px/14.49px 'Liberation Mono',monospace;color:#888;white-space:nowrap;">1</div>
<div style="position:absolute;left:341.5px;top:239.10px;font:normal 12.6px/14.49px 'Liberation Mono',monospace;color:#888;white-space:nowrap;">2</div>
<div style="position:absolute;left:367.9px;top:220.01px;font:normal 12.7px/14.60px 'Liberation Mono',monospace;color:#222;white-space:nowrap;"><b style="color:#c774c4">SELECT</b> <span style="color:#777">*</span> <b style="color:#c774c4">FROM</b> <b style="color:#c774c4">public</b><span style="color:#7aa6cf">.mt_doc_patron</span></div>
<div style="position:absolute;left:327px;top:451px;width:1039px;height:1px;background:#dde0e6"></div>
<div style="position:absolute;left:327px;top:452px;width:1039px;height:28px;background:#fff"></div>
<div style="position:absolute;left:335.4px;top:458.98px;font:normal 12.4px/14.26px 'Liberation Sans',sans-serif;color:#326690;white-space:nowrap;">Data Output</div>
<div style="position:absolute;left:419.7px;top:458.98px;font:normal 12.4px/14.26px 'Liberation Sans',sans-serif;color:#222;white-space:nowrap;">Explain</div>
<div style="position:absolute;left:478.3px;top:458.98px;font:normal 12.4px/14.26px 'Liberation Sans',sans-serif;color:#222;white-space:nowrap;">Messages</div>
<div style="position:absolute;left:553.7px;top:458.98px;font:normal 12.4px/14.26px 'Liberation Sans',sans-serif;color:#222;white-space:nowrap;">Notifications</div>
<div style="position:absolute;left:327px;top:477px;width:84px;height:3px;background:#326690"></div>
<div style="position:absolute;left:411px;top:480px;width:955px;height:1px;background:#dde0e6"></div>
<div style="position:absolute;left:964px;top:517px;width:387px;height:194px;background:#ebeef3"></div>
<div style="position:absolute;left:964px;top:516px;width:402px;height:1px;background:#dde0e6"></div>
<div style="position:absolute;left:327px;top:480px;width:638px;height:1px;background:#dde0e6"></div>
<div style="position:absolute;left:353px;top:480px;width:1px;height:231px;background:#dde0e6"></div>
<div style="position:absolute;left:507px;top:480px;width:1px;height:231px;background:#dde0e6"></div>
<div style="position:absolute;left:568px;top:480px;width:1px;height:231px;background:#dde0e6"></div>
<div style="position:absolute;left:744px;top:480px;width:1px;height:231px;background:#dde0e6"></div>
<div style="position:absolute;left:837px;top:480px;width:1px;height:231px;background:#dde0e6"></div>
<div style="position:absolute;left:964px;top:480px;width:1px;height:231px;background:#dde0e6"></div>
<div style="position:absolute;left:327px;top:480px;width:1px;height:231px;background:#dde0e6"></div>
<div style="position:absolute;left:327px;top:516px;width:637px;height:1px;background:#dde0e6"></div>
<div style="position:absolute;left:359px;top:484.85px;font:bold 11px/12.65px 'Liberation Sans',sans-serif;color:#222;white-space:nowrap;letter-spacing:-0.25px">id</div>
<div style="position:absolute;left:359px;top:499.85px;font:normal 11px/12.65px 'Liberation Sans',sans-serif;color:#222;white-space:nowrap;">[PK] character varying</div>
<svg style="left:492px;top:494px" width="10" height="10"><g transform="rotate(-45 5 5)"><rect x="-0.5" y="3.3" width="8.5" height="3.4" fill="#222"/><rect x="0.8" y="4.3" width="6.5" height="1.4" fill="#fff" opacity="0.35"/><polygon points="-0.5,3.3 -3,5 -0.5,6.7" fill="#222"/><rect x="8.5" y="3.3" width="2" height="3.4" fill="#222"/></g></svg>
<div style="position:absolute;left:512.6px;top:484.85px;font:bold 11px/12.65px 'Liberation Sans',sans-serif;color:#222;white-space:nowrap;letter-spacing:-0.25px">data</div>
<div style="position:absolute;left:512.6px;top:499.85px;font:normal 11px/12.65px 'Liberation Sans',sans-serif;color:#222;white-space:nowrap;">jsonb</div>
<svg style="left:553px;top:494px" width="10" height="10"><g transform="rotate(-45 5 5)"><rect x="-0.5" y="3.3" width="8.5" height="3.4" fill="#222"/><rect x="0.8" y="4.3" width="6.5" height="1.4" fill="#fff" opacity="0.35"/><polygon points="-0.5,3.3 -3,5 -0.5,6.7" fill="#222"/><rect x="8.5" y="3.3" width="2" height="3.4" fill="#222"/></g></svg>
<div style="position:absolute;left:574.5px;top:484.85px;font:bold 11px/12.65px 'Liberation Sans',sans-serif;color:#222;white-space:nowrap;letter-spacing:-0.25px">mt_last_modified</div>
<div style="position:absolute;left:574.5px;top:499.85px;font:normal 11px/12.65px 'Liberation Sans',sans-serif;color:#222;white-space:nowrap;">timestamp with time zone</div>
<svg style="left:729px;top:494px" width="10" height="10"><g transform="rotate(-45 5 5)"><rect x="-0.5" y="3.3" width="8.5" height="3.4" fill="#222"/><rect x="0.8" y="4.3" width="6.5" height="1.4" fill="#fff" opacity="0.35"/><polygon points="-0.5,3.3 -3,5 -0.5,6.7" fill="#222"/><rect x="8.5" y="3.3" width="2" height="3.4" fill="#222"/></g></svg>
<div style="position:absolute;left:750.4px;top:484.85px;font:bold 11px/12.65px 'Liberation Sans',sans-serif;color:#222;white-space:nowrap;letter-spacing:-0.25px">mt_version</div>
<div style="position:absolute;left:750.4px;top:499.85px;font:normal 11px/12.65px 'Liberation Sans',sans-serif;color:#222;white-space:nowrap;">uuid</div>
<svg style="left:822px;top:494px" width="10" height="10"><g transform="rotate(-45 5 5)"><rect x="-0.5" y="3.3" width="8.5" height="3.4" fill="#222"/><rect x="0.8" y="4.3" width="6.5" height="1.4" fill="#fff" opacity="0.35"/><polygon points="-0.5,3.3 -3,5 -0.5,6.7" fill="#222"/><rect x="8.5" y="3.3" width="2" height="3.4" fill="#222"/></g></svg>
<div style="position:absolute;left:843px;top:484.85px;font:bold 11px/12.65px 'Liberation Sans',sans-serif;color:#222;white-space:nowrap;letter-spacing:-0.25px">mt_dotnet_type</div>
<div style="position:absolute;left:843px;top:499.85px;font:normal 11px/12.65px 'Liberation Sans',sans-serif;color:#222;white-space:nowrap;">character varying</div>
<svg style="left:949px;top:494px" width="10" height="10"><g transform="rotate(-45 5 5)"><rect x="-0.5" y="3.3" width="8.5" height="3.4" fill="#222"/><rect x="0.8" y="4.3" width="6.5" height="1.4" fill="#fff" opacity="0.35"/><polygon points="-0.5,3.3 -3,5 -0.5,6.7" fill="#222"/><rect x="8.5" y="3.3" width="2" height="3.4" fill="#222"/></g></svg>
<svg style="left:339px;top:502px" width="11" height="10"><polygon points="10,1 10,9.5 1.5,9.5" fill="#888"/></svg>
<div style="position:absolute;left:327px;top:517px;width:640px;height:194px;overflow:hidden">
<div style="position:absolute;left:0px;top:22px;width:637px;height:1px;background:#dde0e6"></div>
<div style="position:absolute;left:0px;top:3.94px;font:normal 11px/12.65px 'Liberation Sans',sans-serif;color:#222;white-space:nowrap;width:26px;text-align:center">1</div>
<div style="position:absolute;left:31px;top:4.22px;font:normal 10.7px/12.30px 'Liberation Sans',sans-serif;color:#222;white-space:nowrap;letter-spacing:-0.2px">C1547D93-A8B6-43FC-A83E…</div>
<div style="position:absolute;left:184.60000000000002px;top:4.22px;font:normal 10.7px/12.30px 'Liberation Sans',sans-serif;color:#222;white-space:nowrap;letter-spacing:-0.35px">{"Id": "C1…</div>
<div style="position:absolute;left:246.5px;top:4.22px;font:normal 10.7px/12.30px 'Liberation Sans',sans-serif;color:#222;white-space:nowrap;letter-spacing:0.0px">2020-02-17 05:48:52.415083+00</div>
<div style="position:absolute;left:422.4px;top:4.22px;font:normal 10.7px/12.30px 'Liberation Sans',sans-serif;color:#222;white-space:nowrap;letter-spacing:0.0px">017051b1-3342…</div>
<div style="position:absolute;left:515px;top:4.22px;font:normal 10.7px/12.30px 'Liberation Sans',sans-serif;color:#222;white-space:nowrap;letter-spacing:0.0px">Infowayz.Ajna.Io.Data…</div>
<div style="position:absolute;left:0px;top:44px;width:637px;height:1px;background:#dde0e6"></div>
<div style="position:absolute;left:0px;top:26.44px;font:normal 11px/12.65px 'Liberation Sans',sans-serif;color:#222;white-space:nowrap;width:26px;text-align:center">2</div>
<div style="position:absolute;left:31px;top:26.72px;font:normal 10.7px/12.30px 'Liberation Sans',sans-serif;color:#222;white-space:nowrap;letter-spacing:-0.2px">CD94503B-FBE3-4829-973C…</div>
<div style="position:absolute;left:184.60000000000002px;top:26.72px;font:normal 10.7px/12.30px 'Liberation Sans',sans-serif;color:#222;white-space:nowrap;letter-spacing:-0.35px">{"Id": "CD…</div>
<div style="position:absolute;left:246.5px;top:26.72px;font:normal 10.7px/12.30px 'Liberation Sans',sans-serif;color:#222;white-space:nowrap;letter-spacing:0.0px">2020-02-17 05:48:52.461985+00</div>
<div style="position:absolute;left:422.4px;top:26.72px;font:normal 10.7px/12.30px 'Liberation Sans',sans-serif;color:#222;white-space:nowrap;letter-spacing:0.0px">017051b1-3372…</div>
<div style="position:absolute;left:515px;top:26.72px;font:normal 10.7px/12.30px 'Liberation Sans',sans-serif;color:#222;white-space:nowrap;letter-spacing:0.0px">Infowayz.Ajna.Io.Data…</div>
<div style="position:absolute;left:0px;top:67px;width:637px;height:1px;background:#dde0e6"></div>
<div style="position:absolute;left:0px;top:48.94px;font:normal 11px/12.65px 'Liberation Sans',sans-serif;color:#222;white-space:nowrap;width:26px;text-align:center">3</div>
<div style="position:absolute;left:31px;top:49.22px;font:normal 10.7px/12.30px 'Liberation Sans',sans-serif;color:#222;white-space:nowrap;letter-spacing:-0.2px">c115a821-0e87-4d48-81bc-…</div>
<div style="position:absolute;left:184.60000000000002px;top:49.22px;font:normal 10.7px/12.30px 'Liberation Sans',sans-serif;color:#222;white-space:nowrap;letter-spacing:-0.35px">{"Id": "c11…</div>
<div style="position:absolute;left:246.5px;top:49.22px;font:normal 10.7px/12.30px 'Liberation Sans',sans-serif;color:#222;white-space:nowrap;letter-spacing:0.0px">2020-02-17 05:48:52.446332+00</div>
<div style="position:absolute;left:422.4px;top:49.22px;font:normal 10.7px/12.30px 'Liberation Sans',sans-serif;color:#222;white-space:nowrap;letter-spacing:0.0px">017051b1-3365…</div>
<div style="position:absolute;left:515px;top:49.22px;font:normal 10.7px/12.30px 'Liberation Sans',sans-serif;color:#222;white-space:nowrap;letter-spacing:0.0px">Infowayz.Ajna.Io.Data…</div>
<div style="position:absolute;left:0px;top:89px;width:637px;height:1px;background:#dde0e6"></div>
<div style="position:absolute;left:0px;top:71.44px;font:normal 11px/12.65px 'Liberation Sans',sans-serif;color:#222;white-space:nowrap;width:26px;text-align:center">4</div>
<div style="position:absolute;left:31px;top:71.72px;font:normal 10.7px/12.30px 'Liberation Sans',sans-serif;color:#222;white-space:nowrap;letter-spacing:-0.2px">BA5225CC-8AB8-4EC6-B6B…</div>
<div style="position:absolute;left:184.60000000000002px;top:71.72px;font:normal 10.7px/12.30px 'Liberation Sans',sans-serif;color:#222;white-space:nowrap;letter-spacing:-0.35px">{"Id": "BA…</div>
<div style="position:absolute;left:246.5px;top:71.72px;font:normal 10.7px/12.30px 'Liberation Sans',sans-serif;color:#222;white-space:nowrap;letter-spacing:0.0px">2020-02-17 05:48:52.368204+00</div>
<div style="position:absolute;left:422.4px;top:71.72px;font:normal 10.7px/12.30px 'Liberation Sans',sans-serif;color:#222;white-space:nowrap;letter-spacing:0.0px">017051b1-3314…</div>
<div style="position:absolute;left:515px;top:71.72px;font:normal 10.7px/12.30px 'Liberation Sans',sans-serif;color:#222;white-space:nowrap;letter-spacing:0.0px">Infowayz.Ajna.Io.Data…</div>
<div style="position:absolute;left:0px;top:112px;width:637px;height:1px;background:#dde0e6"></div>
<div style="position:absolute;left:0px;top:93.94px;font:normal 11px/12.65px 'Liberation Sans',sans-serif;color:#222;white-space:nowrap;width:26px;text-align:center">5</div>
<div style="position:absolute;left:31px;top:94.22px;font:normal 10.7px/12.30px 'Liberation Sans',sans-serif;color:#222;white-space:nowrap;letter-spacing:-0.2px">08CB8C6F-5CCB-4193-98EC…</div>
<div style="position:absolute;left:184.60000000000002px;top:94.22px;font:normal 10.7px/12.30px 'Liberation Sans',sans-serif;color:#222;white-space:nowrap;letter-spacing:-0.35px">{"Id": "08…</div>
<div style="position:absolute;left:246.5px;top:94.22px;font:normal 10.7px/12.30px 'Liberation Sans',sans-serif;color:#222;white-space:nowrap;letter-spacing:0.0px">2020-02-17 05:54:51.4152+00</div>
<div style="position:absolute;left:422.4px;top:94.22px;font:normal 10.7px/12.30px 'Liberation Sans',sans-serif;color:#222;white-space:nowrap;letter-spacing:0.0px">017051b6-ad9b…</div>
<div style="position:absolute;left:515px;top:94.22px;font:normal 10.7px/12.30px 'Liberation Sans',sans-serif;color:#222;white-space:nowrap;letter-spacing:0.0px">Infowayz.Ajna.Io.Data…</div>
<div style="position:absolute;left:0px;top:134px;width:637px;height:1px;background:#dde0e6"></div>
<div style="position:absolute;left:0px;top:116.44px;font:normal 11px/12.65px 'Liberation Sans',sans-serif;color:#222;white-space:nowrap;width:26px;text-align:center">6</div>
<div style="position:absolute;left:31px;top:116.72px;font:normal 10.7px/12.30px 'Liberation Sans',sans-serif;color:#222;white-space:nowrap;letter-spacing:-0.2px">5C95CCE5-4F78-4FD7-A329…</div>
<div style="position:absolute;left:184.60000000000002px;top:116.72px;font:normal 10.7px/12.30px 'Liberation Sans',sans-serif;color:#222;white-space:nowrap;letter-spacing:-0.35px">{"Id": "5C…</div>
<div style="position:absolute;left:246.5px;top:116.72px;font:normal 10.7px/12.30px 'Liberation Sans',sans-serif;color:#222;white-space:nowrap;letter-spacing:0.0px">2020-02-17 05:49:18.118254+00</div>
<div style="position:absolute;left:422.4px;top:116.72px;font:normal 10.7px/12.30px 'Liberation Sans',sans-serif;color:#222;white-space:nowrap;letter-spacing:0.0px">017051b1-97a4…</div>
<div style="position:absolute;left:515px;top:116.72px;font:normal 10.7px/12.30px 'Liberation Sans',sans-serif;color:#222;white-space:nowrap;letter-spacing:0.0px">Infowayz.Ajna.Io.Data…</div>
<div style="position:absolute;left:0px;top:157px;width:637px;height:1px;background:#dde0e6"></div>
<div style="position:absolute;left:0px;top:138.94px;font:normal 11px/12.65px 'Liberation Sans',sans-serif;color:#222;white-space:nowrap;width:26px;text-align:center">7</div>
<div style="position:absolute;left:31px;top:139.22px;font:normal 10.7px/12.30px 'Liberation Sans',sans-serif;color:#222;white-space:nowrap;letter-spacing:-0.2px">0B45563E-C1C7-421F-8044-…</div>
<div style="position:absolute;left:184.60000000000002px;top:139.22px;font:normal 10.7px/12.30px 'Liberation Sans',sans-serif;color:#222;white-space:nowrap;letter-spacing:-0.35px">{"Id": "0B…</div>
<div style="position:absolute;left:246.5px;top:139.22px;font:normal 10.7px/12.30px 'Liberation Sans',sans-serif;color:#222;white-space:nowrap;letter-spacing:0.0px">2020-02-17 05:52:22.618285+00</div>
<div style="position:absolute;left:422.4px;top:139.22px;font:normal 10.7px/12.30px 'Liberation Sans',sans-serif;color:#222;white-space:nowrap;letter-spacing:0.0px">017051b4-685d…</div>
<div style="position:absolute;left:515px;top:139.22px;font:normal 10.7px/12.30px 'Liberation Sans',sans-serif;color:#222;white-space:nowrap;letter-spacing:0.0px">Infowayz.Ajna.Io.Data…</div>
<div style="position:absolute;left:0px;top:179px;width:637px;height:1px;background:#dde0e6"></div>
<div style="position:absolute;left:0px;top:161.44px;font:normal 11px/12.65px 'Liberation Sans',sans-serif;color:#222;white-space:nowrap;width:26px;text-align:center">8</div>
<div style="position:absolute;left:31px;top:161.72px;font:normal 10.7px/12.30px 'Liberation Sans',sans-serif;color:#222;white-space:nowrap;letter-spacing:-0.2px">CECBD9A4-74ED-4356-BC0…</div>
<div style="position:absolute;left:184.60000000000002px;top:161.72px;font:normal 10.7px/12.30px 'Liberation Sans',sans-serif;color:#222;white-space:nowrap;letter-spacing:-0.35px">{"Id": "CE…</div>
<div style="position:absolute;left:246.5px;top:161.72px;font:normal 10.7px/12.30px 'Liberation Sans',sans-serif;color:#222;white-space:nowrap;letter-spacing:0.0px">2020-02-17 05:48:52.383834+00</div>
<div style="position:absolute;left:422.4px;top:161.72px;font:normal 10.7px/12.30px 'Liberation Sans',sans-serif;color:#222;white-space:nowrap;letter-spacing:0.0px">017051b1-3328…</div>
<div style="position:absolute;left:515px;top:161.72px;font:normal 10.7px/12.30px 'Liberation Sans',sans-serif;color:#222;white-space:nowrap;letter-spacing:0.0px">Infowayz.Ajna.Io.Data…</div>
<div style="position:absolute;left:0px;top:202px;width:637px;height:1px;background:#dde0e6"></div>
<div style="position:absolute;left:0px;top:183.94px;font:normal 11px/12.65px 'Liberation Sans',sans-serif;color:#222;white-space:nowrap;width:26px;text-align:center">9</div>
<div style="position:absolute;left:31px;top:184.22px;font:normal 10.7px/12.30px 'Liberation Sans',sans-serif;color:#222;white-space:nowrap;letter-spacing:-0.2px">5191A9B6-A6D0-4B61-9E25…</div>
<div style="position:absolute;left:184.60000000000002px;top:184.22px;font:normal 10.7px/12.30px 'Liberation Sans',sans-serif;color:#222;white-space:nowrap;letter-spacing:-0.35px">{"Id": "51…</div>
<div style="position:absolute;left:246.5px;top:184.22px;font:normal 10.7px/12.30px 'Liberation Sans',sans-serif;color:#222;white-space:nowrap;letter-spacing:0.0px">2020-02-17 05:48:52.399458+00</div>
<div style="position:absolute;left:422.4px;top:184.22px;font:normal 10.7px/12.30px 'Liberation Sans',sans-serif;color:#222;white-space:nowrap;letter-spacing:0.0px">017051b1-3336…</div>
<div style="position:absolute;left:515px;top:184.22px;font:normal 10.7px/12.30px 'Liberation Sans',sans-serif;color:#222;white-space:nowrap;letter-spacing:0.0px">Infowayz.Ajna.Io.Data…</div>
</div>
<div style="position:absolute;left:1351px;top:516px;width:15px;height:195px;background:#e8e8e8"></div>
<div style="position:absolute;left:1351px;top:531px;width:15px;height:142px;background:#bfbfbf"></div>
<svg style="left:1351px;top:516px" width="15" height="195"><polyline points="4,11 7.5,7.5 11,11" fill="none" stroke="#a3a3a3" stroke-width="1"/><polyline points="4,184 7.5,187.5 11,184" fill="none" stroke="#a3a3a3" stroke-width="1"/></svg>
<div style="position:absolute;left:327px;top:711px;width:1039px;height:17px;background:#fff"></div>
<div style="position:absolute;left:903px;top:670px;width:453px;height:35px;background:#dff0dc;border:1px solid #4ca64c;border-radius:4px"></div>
<svg style="left:918px;top:681px" width="14" height="12"><polyline points="1.5,6 5,9.5 12,2" fill="none" stroke="#3c9a3c" stroke-width="2.6"/></svg>
<div style="position:absolute;left:938px;top:680.10px;font:normal 12.6px/14.49px 'Liberation Sans',sans-serif;color:#222;white-space:nowrap;">Successfully run. Total query runtime: 2 secs 570 msec. 9 rows affected.</div>
<svg style="left:336px;top:136px" width="18" height="15"><g fill="none" stroke="#8a8a8a" stroke-width="1.2" stroke-linejoin="round"><path d="M1 3 L1 12.5 L13 12.5 L16 6.5 L4 6.5 L1 12.5"/><path d="M1 3 L1 1.5 L5 1.5 L6.5 3 L13 3 L13 6.5"/></g></svg>
<svg style="left:364px;top:137px" width="15" height="15"><g fill="none" stroke="#8a8a8a" stroke-width="1.2"><path d="M1 1 L11 1 L13.5 3.5 L13.5 13.5 L1 13.5 Z"/><rect x="3.5" y="1" width="6" height="4"/><rect x="3.5" y="8.5" width="7.5" height="5"/></g></svg>
<svg style="left:389px;top:141px" width="10" height="7"><polyline points="1,1.2 4.5,4.8 8,1.2" fill="none" stroke="#8a8a8a" stroke-width="1.5"/></svg>
<svg style="left:419px;top:137px" width="17" height="15"><g fill="none" stroke="#8a8a8a" stroke-width="1.1"><rect x="1" y="1" width="14" height="12"/><line x1="1" y1="5" x2="15" y2="5"/><line x1="1" y1="9" x2="15" y2="9"/><line x1="5.5" y1="1" x2="5.5" y2="13"/><line x1="10.5" y1="1" x2="10.5" y2="13"/></g><polygon points="5.5,7 10.5,7 8,11" fill="#8a8a8a"/><rect x="7" y="3" width="2" height="4" fill="#8a8a8a"/></svg>
<div style="position:absolute;left:419px;top:137px;width:17px;height:3px;background:#8a8a8a"></div>
<svg style="left:456px;top:136px" width="16" height="16"><g fill="none" stroke="#8a8a8a" stroke-width="1.8"><circle cx="6.5" cy="6.5" r="4.8"/><line x1="10" y1="10" x2="14" y2="14"/></g></svg>
<svg style="left:482px;top:141px" width="10" height="7"><polyline points="1,1.2 4.5,4.8 8,1.2" fill="none" stroke="#8a8a8a" stroke-width="1.5"/></svg>
<svg style="left:511px;top:136px" width="16" height="16"><g fill="#f6f7f9" stroke="#8a8a8a" stroke-width="1.1"><path d="M1.5 4 L4 1.5 L9 1.5 L9 10 L1.5 10 Z"/><path d="M5 7 L8 4.5 L13.5 4.5 L13.5 14 L5 14 Z" fill="#fff"/></g></svg>
<svg style="left:538px;top:141px" width="10" height="7"><polyline points="1,1.2 4.5,4.8 8,1.2" fill="none" stroke="#222" stroke-width="1.8"/></svg>
<svg style="left:559px;top:136px" width="16" height="16"><g stroke="#8a8a8a" stroke-width="1.1"><rect x="1.5" y="1.5" width="8" height="11" fill="#8a8a8a"/><path d="M6 5.5 L11 5.5 L14 8.5 L14 14.5 L6 14.5 Z" fill="#fff"/></g></svg>
<svg style="left:594px;top:136px" width="14" height="16"><g fill="none" stroke="#8a8a8a" stroke-width="1.3"><line x1="1" y1="3" x2="12" y2="3"/><path d="M4.5 3 L4.5 1.2 L8.5 1.2 L8.5 3"/><path d="M2.3 3.5 L3 14 L10 14 L10.7 3.5"/><line x1="5" y1="6" x2="5" y2="12"/><line x1="8" y1="6" x2="8" y2="12"/></g></svg>
<svg style="left:627px;top:136px" width="16" height="16"><g fill="none" stroke="#8a8a8a" stroke-width="1.2"><path d="M9 2.5 L1.5 2.5 L1.5 13.5 L12.5 13.5 L12.5 8"/><path d="M5 10.5 L5.5 8 L11.5 2 L13.5 4 L7.5 10 Z"/></g></svg>
<svg style="left:644px;top:141px" width="10" height="7"><polyline points="1,1.2 4.5,4.8 8,1.2" fill="none" stroke="#8a8a8a" stroke-width="1.5"/></svg>
<svg style="left:674px;top:136px" width="14" height="16"><polygon points="0.5,1.5 13,1.5 8,7.5 8,14 5.5,12 5.5,7.5" fill="#222"/></svg>
<svg style="left:698px;top:140px" width="10" height="7"><polyline points="1,1.2 4.5,4.8 8,1.2" fill="none" stroke="#222" stroke-width="1.8"/></svg>
<div style="position:absolute;left:823px;top:137px;width:11px;height:12px;background:#8a8a8a"></div>
<svg style="left:849px;top:137px" width="13" height="14"><polygon points="1,0.5 12,6.5 1,12.5" fill="#222"/></svg>
<svg style="left:875px;top:141px" width="10" height="7"><polyline points="1,1.2 4.5,4.8 8,1.2" fill="none" stroke="#8a8a8a" stroke-width="1.5"/></svg>
<svg style="left:904px;top:136px" width="15" height="16"><g fill="none" stroke="#8a8a8a" stroke-width="1"><path d="M4.5 9 L4.5 2 Q5.5 0.8 6.5 2 L6.5 7 L6.5 6 Q7.5 5 8.5 6 L8.5 7.5 Q9.5 6.5 10.5 7.5 L10.5 8.5 Q11.5 7.8 12.5 8.8 L12.5 12 Q11.5 15 8.5 15 L6.5 15 Q4.5 14 2 10.5 Q2 9 3.5 9.8 Z"/></g></svg>
<svg style="left:931px;top:137px" width="16" height="12"><rect x="0.5" y="0.5" width="15" height="11" fill="#fff" stroke="#8a8a8a" stroke-width="1"/><rect x="0.5" y="0.5" width="15" height="2.5" fill="#8a8a8a"/><g stroke="#8a8a8a" stroke-width="1"><line x1="3" y1="5" x2="13" y2="5"/><line x1="3" y1="7" x2="13" y2="7"/><line x1="3" y1="9" x2="13" y2="9"/></g></svg>
<svg style="left:958px;top:141px" width="10" height="7"><polyline points="1,1.2 4.5,4.8 8,1.2" fill="none" stroke="#8a8a8a" stroke-width="1.5"/></svg>
<svg style="left:987px;top:136px" width="14" height="18"><g fill="#8a8a8a"><path d="M3 5 Q4 1.5 8 2 L8 0.5 L11 3 L8 5.5 L8 4 Q5 3.5 3 5Z"/><ellipse cx="7.5" cy="8.5" rx="5.5" ry="1.8"/><path d="M2 10 Q7.5 12.5 13 10 L13 11.5 Q7.5 14 2 11.5Z"/><path d="M2 13 Q7.5 15.5 13 13 L13 14.5 Q7.5 17 2 14.5Z"/></g></svg>
<svg style="left:1014px;top:136px" width="14" height="18"><g fill="#8a8a8a"><path d="M11 5 Q10 1.5 6 2 L6 0.5 L3 3 L6 5.5 L6 4 Q9 3.5 11 5Z"/><ellipse cx="7.5" cy="8.5" rx="5.5" ry="1.8"/><path d="M2 10 Q7.5 12.5 13 10 L13 11.5 Q7.5 14 2 11.5Z"/><path d="M2 13 Q7.5 15.5 13 13 L13 14.5 Q7.5 17 2 14.5Z"/></g></svg>
<svg style="left:1049px;top:138px" width="15" height="11"><g stroke="#222" stroke-width="1.2" fill="#222"><path d="M5 1 L13.5 1 L9 9.5 L0.8 9.5 Z" fill="none"/><path d="M5 1 L13.5 1 L11 5.5 L2.7 5.5 Z"/></g></svg>
<svg style="left:1065px;top:141px" width="10" height="7"><polyline points="1,1.2 4.5,4.8 8,1.2" fill="none" stroke="#222" stroke-width="1.8"/></svg>
<svg style="left:1096px;top:136px" width="14" height="16"><g fill="#222"><rect x="5.5" y="0.5" width="3" height="6"/><polygon points="2.5,6 11.5,6 7,11"/><path d="M0.5 9 L2.5 9 L2.5 12 L11.5 12 L11.5 9 L13.5 9 L13.5 14.5 L0.5 14.5 Z"/></g></svg>
<svg style="left:333px;top:161px" width="22" height="21"><g transform="rotate(-38 11 10.5)" fill="none" stroke="#fff" stroke-width="1.7"><path d="M9.3 5.5 L7.5 5.5 Q3.8 5.5 3.8 10.5 Q3.8 15.5 7.5 15.5 L9.3 15.5 Z"/><path d="M12.2 5.5 L14 5.5 Q17.7 5.5 17.7 10.5 Q17.7 15.5 14 15.5 L12.2 15.5 Z"/><line x1="0.5" y1="10.5" x2="3.8" y2="10.5"/><line x1="17.7" y1="10.5" x2="21" y2="10.5"/><line x1="9.3" y1="8.3" x2="12.2" y2="8.3"/><line x1="9.3" y1="12.7" x2="12.2" y2="12.7"/></g></svg>
<div style="position:absolute;left:0px;top:728px;width:1366px;height:40px;background:linear-gradient(90deg,#233c45 0px,#223a44 400px,#1f3244 850px,#1e2f44 1081px,#1c2845 1082px,#1b2744 1366px)"></div>
<svg style="left:15px;top:739px" width="18" height="18"><g fill="#fff"><polygon points="0.6,2.5 6.9,1.8 6.9,8 0.6,8"/><polygon points="7.9,1.7 17,0.7 17,8 7.9,8"/><polygon points="0.6,9 6.9,9 6.9,15.4 0.6,14.7"/><polygon points="7.9,9 17,9 17,17.4 7.9,16.4"/></g></svg>
<div style="position:absolute;left:48px;top:728px;width:344px;height:40px;background:#f2f2f2;border-top:1px solid #d0d0d0"></div>
<svg style="left:58px;top:739px" width="20" height="19"><g fill="none" stroke="#222" stroke-width="1.2"><circle cx="11" cy="7" r="5.3"/><line x1="2.5" y1="17" x2="7.3" y2="11"/></g></svg>
<div style="position:absolute;left:88.8px;top:740.37px;font:normal 14.4px/16.56px 'Liberation Sans',sans-serif;color:#2b2b2b;white-space:nowrap;">Type here to search</div>
<svg style="left:406px;top:738px" width="20" height="20"><circle cx="9.7" cy="10" r="7" fill="none" stroke="#fff" stroke-width="2"/></svg>
<svg style="left:454px;top:738px" width="20" height="20"><g fill="none" stroke="#fff" stroke-width="1.3"><rect x="3" y="4.5" width="10" height="8"/><line x1="1.5" y1="2" x2="13.5" y2="2"/><line x1="1.5" y1="15" x2="13.5" y2="15"/><line x1="17" y1="2" x2="17" y2="16"/></g><rect x="15.8" y="4.3" width="2.5" height="2.5" fill="#fff"/></svg>
<div style="position:absolute;left:450px;top:739px;width:3px;height:3px;background:transparent"></div>
<svg style="left:503.5px;top:736.5px" width="23" height="23"><circle cx="11.5" cy="11.5" r="11" fill="#db4437"/>
<path d="M11.5 11.5 L1.98 17 A11 11 0 0 1 2 6 Z" fill="#0f9d58"/>
<path d="M11.5 11.5 L2 6 L2.3 5.5 L11.5 6.5 Z" fill="#db4437"/>
<path d="M11.5 11.5 L21 17 A11 11 0 0 1 1.98 17 Z" fill="#0f9d58"/>
<path d="M11.5 11.5 L21.03 6 A11 11 0 0 1 11.5 22.5 L11.5 22.5 Z" fill="#ffcd40"/>
<path d="M11.5 11.5 L21.03 6 A11 11 0 0 1 21.03 17 Z" fill="#ffcd40"/>
<circle cx="11.5" cy="11.5" r="5" fill="#fff"/><circle cx="11.5" cy="11.5" r="4" fill="#4285f4"/></svg>
<svg style="left:797.5px;top:736.5px" width="23" height="23"><circle cx="11.5" cy="11.5" r="11" fill="#db4437"/>
<path d="M11.5 11.5 L1.98 17 A11 11 0 0 1 2 6 Z" fill="#0f9d58"/>
<path d="M11.5 11.5 L2 6 L2.3 5.5 L11.5 6.5 Z" fill="#db4437"/>
<path d="M11.5 11.5 L21 17 A11 11 0 0 1 1.98 17 Z" fill="#0f9d58"/>
<path d="M11.5 11.5 L21.03 6 A11 11 0 0 1 11.5 22.5 L11.5 22.5 Z" fill="#ffcd40"/>
<path d="M11.5 11.5 L21.03 6 A11 11 0 0 1 21.03 17 Z" fill="#ffcd40"/>
<circle cx="11.5" cy="11.5" r="5" fill="#fff"/><circle cx="11.5" cy="11.5" r="4" fill="#4285f4"/></svg>
<svg style="left:552px;top:736px" width="24" height="24"><polygon points="17,0.5 23,3.5 23,20.5 17,23.5" fill="#b27ce8"/><polygon points="17,0.5 17,6 5.5,14.5 3.5,13 " fill="#865fc5"/><polygon points="17,23.5 17,18 5.5,9.5 3.5,11" fill="#7b52bd"/><polygon points="0.5,7.5 3.5,6.5 3.5,17.5 0.5,16.5" fill="#6d45b0"/><polygon points="3.5,8.3 8,12 3.5,15.7" fill="#6d45b0"/></svg>
<svg style="left:601px;top:737px" width="23" height="23"><polygon points="16.5,0.5 22.5,3.5 22.5,19.5 16.5,22.5 6,13.5 2.5,16 0.5,15 0.5,8 2.5,7 6,9.5" fill="#0065a9"/><polygon points="16.5,0.5 22.5,3.5 22.5,19.5 16.5,22.5" fill="#1f9cf0"/><polygon points="16.5,6 16.5,17 9,11.5" fill="#1e3146"/><polygon points="2.8,9 6.5,11.5 2.8,14" fill="#1e3146"/></svg>
<svg style="left:650px;top:738px" width="24" height="21"><rect x="0.5" y="2" width="23" height="18" fill="#f5c342"/><rect x="0.5" y="0.5" width="9" height="3" fill="#e4a822"/><rect x="0.5" y="6" width="23" height="14" fill="#ffd75e"/><rect x="6" y="11" width="12" height="9" fill="#2b8ad8"/><rect x="9" y="15" width="6" height="5" fill="#1e3146"/></svg>
<div style="position:absolute;left:687px;top:728px;width:48px;height:40px;background:#4a5a64"></div>
<svg style="left:699px;top:737px" width="24" height="23"><path d="M2 11 Q3 2 12 1.5 Q21.5 1.5 22.5 11 L22.5 13.5 L7.5 13.5 Q8 18 13 18.5 Q17 18.7 21 16.5 L21 20.5 Q17 22.5 12.5 22.5 Q3.5 22 2.5 14 Q4 7 10.5 6 Q6 8 5.5 10 L16 10 Q15.5 6 11.5 6 Q7 6 2 11 Z" fill="#1f84e0"/></svg>
<svg style="left:749px;top:740px" width="21" height="16"><rect x="0.5" y="0.5" width="20" height="15" fill="#4fb0ee"/><rect x="1.5" y="1.5" width="18" height="13" fill="#8fd0f7"/><circle cx="6.5" cy="7" r="3.8" fill="#fff"/><path d="M6.5 7 L6.5 3.2 A3.8 3.8 0 0 1 10.3 7Z" fill="#f0a030"/><g fill="#fff"><rect x="12" y="3" width="6" height="1.3"/><rect x="12" y="5.5" width="6" height="1.3"/><rect x="12" y="8" width="6" height="1.3"/><rect x="12" y="10.5" width="6" height="1.3"/></g><rect x="3" y="12" width="8" height="1" fill="#f0a030"/></svg>
<div style="position:absolute;left:495px;top:766px;width:40px;height:2px;background:#76b9ed"></div>
<div style="position:absolute;left:544px;top:766px;width:40px;height:2px;background:#76b9ed"></div>
<div style="position:absolute;left:593px;top:766px;width:40px;height:2px;background:#76b9ed"></div>
<div style="position:absolute;left:642px;top:766px;width:40px;height:2px;background:#76b9ed"></div>
<div style="position:absolute;left:687px;top:766px;width:48px;height:2px;background:#76b9ed"></div>
<div style="position:absolute;left:740px;top:766px;width:40px;height:2px;background:#76b9ed"></div>
<div style="position:absolute;left:789px;top:766px;width:40px;height:2px;background:#76b9ed"></div>
<svg style="left:1157px;top:743px" width="16" height="10"><polyline points="1.5,8.5 7.8,2 14,8.5" fill="none" stroke="#fff" stroke-width="1.3"/></svg>
<svg style="left:1182px;top:741px" width="17" height="16"><g fill="none" stroke="#fff" stroke-width="1.2"><path d="M1.5 13.5 A12 12 0 0 1 13.5 1.5"/><path d="M4.5 13.5 A9 9 0 0 1 13.5 4.5"/><path d="M7.5 13.5 A6 6 0 0 1 13.5 7.5"/><path d="M10.5 13.5 A3 3 0 0 1 13.5 10.5"/></g><circle cx="13" cy="13" r="1.5" fill="#fff"/></svg>
<svg style="left:1204px;top:741px" width="19" height="16"><g fill="none" stroke="#fff" stroke-width="1.2"><path d="M1 5.5 L4 5.5 L8.5 1.5 L8.5 14.5 L4 10.5 L1 10.5 Z"/><path d="M11 5.5 Q12.5 8 11 10.5"/><path d="M13.5 3.5 Q16 8 13.5 12.5" stroke="#aaa"/><path d="M16 1.5 Q19.5 8 16 14.5" stroke="#888"/></g></svg>
<svg style="left:1228px;top:742px" width="18" height="13"><g fill="none" stroke="#fff" stroke-width="1.2"><rect x="5.5" y="3.5" width="10.5" height="7"/><line x1="16.5" y1="5.5" x2="16.5" y2="8.5" stroke-width="1.8"/><path d="M1 6 L3 6 Q5 6 5.5 7"/></g><rect x="6.5" y="4.5" width="7" height="5" fill="#fff"/><g stroke="#fff" stroke-width="1"><line x1="1.5" y1="1" x2="1.5" y2="4"/><line x1="3.5" y1="1" x2="3.5" y2="4"/></g><rect x="0.5" y="3.5" width="4" height="3" fill="#fff"/></svg>
<div style="position:absolute;left:1257.5px;top:732.69px;font:normal 11.5px/13.22px 'Liberation Sans',sans-serif;color:#fff;white-space:nowrap;">12:00 PM</div>
<div style="position:absolute;left:1255px;top:749.92px;font:normal 11.8px/13.57px 'Liberation Sans',sans-serif;color:#fff;white-space:nowrap;">2/17/2020</div>
<svg style="left:1324px;top:740px" width="18" height="17"><path d="M1 1 L16.5 1 L16.5 12 L10.5 12 L8.5 15 L6.5 12 L1 12 Z" fill="none" stroke="#fff" stroke-width="1.2"/></svg>
<div style="position:absolute;left:1361px;top:728px;width:1px;height:40px;background:#5c6a7c"></div>
</body></html>
